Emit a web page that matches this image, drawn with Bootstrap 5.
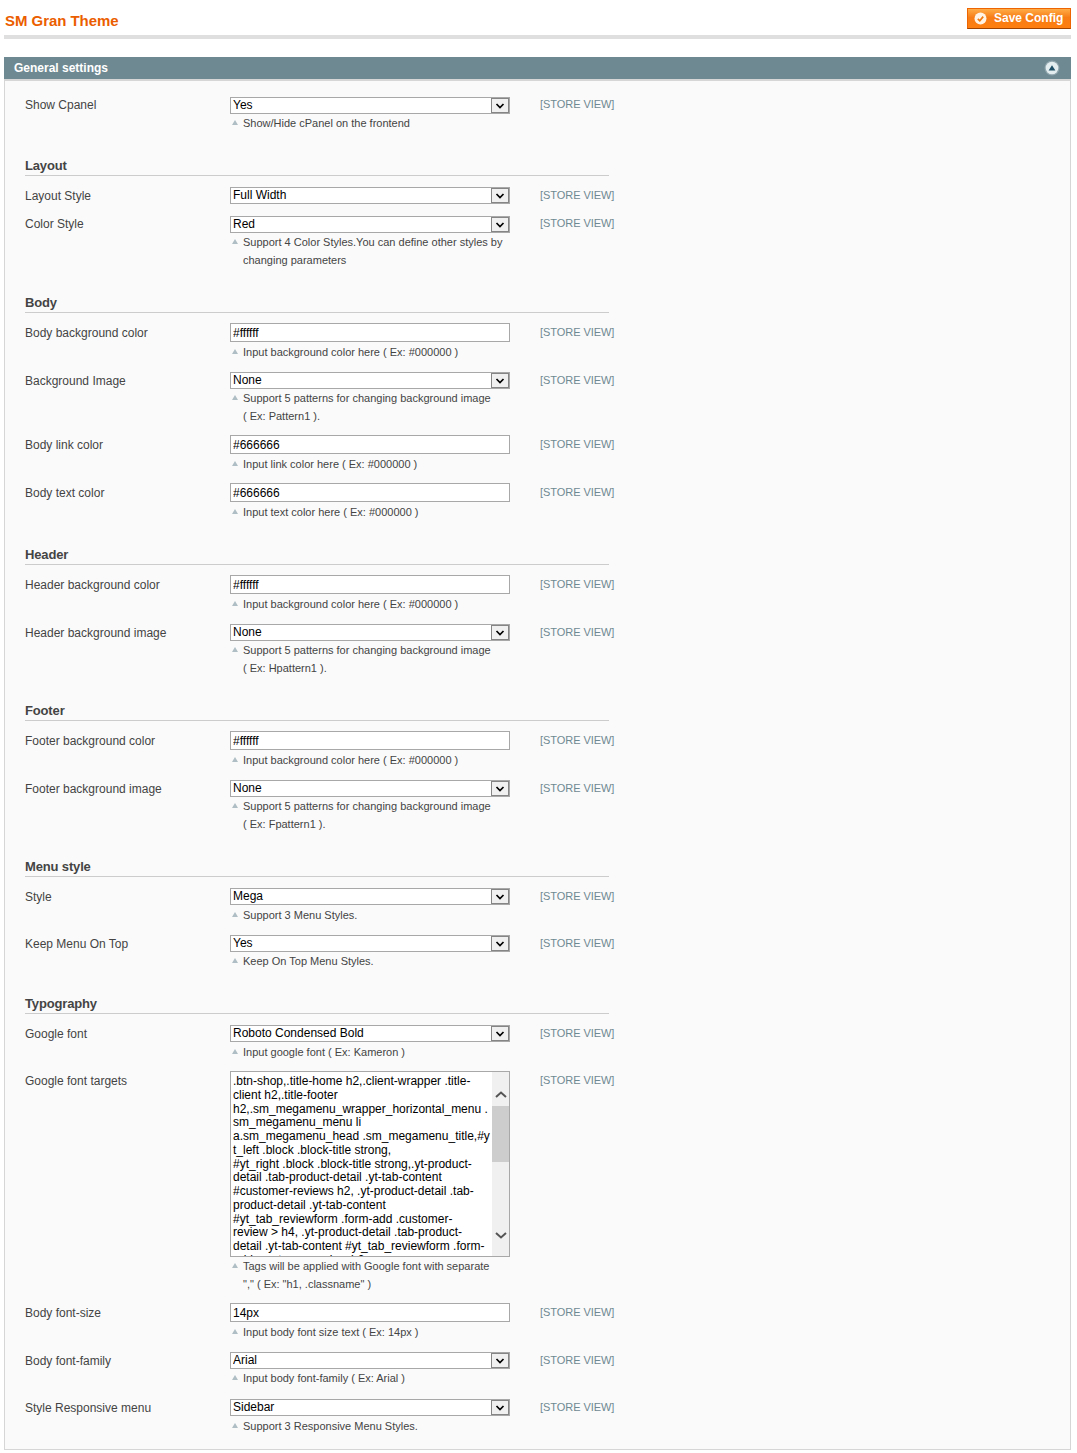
<!DOCTYPE html>
<html lang="en">
<head>
  <meta charset="UTF-8" />
  <meta name="viewport" content="width=device-width, initial-scale=1.0"/>
  <title>SM Gran Theme</title>
  <link href="https://cdn.jsdelivr.net/npm/bootstrap@5.3.0/dist/css/bootstrap.min.css" rel="stylesheet">
  <style>
    body {
      background-color: #fff;
      color: #444;
      font-family: "Liberation Sans", Arial, sans-serif;
      font-size: 12px;
      padding: 0 6px 0 4px;
    }
    .page-head {
      height: 39px;
      border-bottom: 4px solid #dfdfdf;
      padding-top: 8px;
    }
    .page-title {
      font-size: 15px;
      font-weight: 700;
      color: #eb5e00;
      margin: 4px 0 0 1px;
      line-height: 18px;
      letter-spacing: -.05px;
    }
    .save-btn {
      height: 21px;
      width: 104px;
      padding: 0 0 2px 6px;
      border: 1px solid #ed6502;
      border-bottom-color: #a04300;
      border-radius: 0;
      background: linear-gradient(#ffac47, #f77c16 45%, #ff7f0f);
      color: #fff;
      font-size: 12px;
      font-weight: 700;
      gap: 7px;
    }
    .save-btn svg { margin-top: 2px; }
    .panel-head {
      margin-top: 18px;
      height: 22px;
      padding: 0 11px 0 10px;
      background: #6f8992;
      color: #fff;
      font-weight: 700;
    }
    .panel-body {
      background: #fafafa;
      border: 1px solid #d6d6d6;
      border-top-width: 2px;
      padding: 15px 20px 3px;
    }
    .cfg-row { padding-bottom: 11px; }
    .cfg-row.is-bare { padding-bottom: 10px; }
    .cfg-label { width: 205px; line-height: 18px; flex: none; }
    .cfg-field { width: 280px; flex: none; }
    .cfg-scope {
      margin-left: 30px;
      font-size: 11px;
      line-height: 17px;
      color: #6f8992;
      letter-spacing: -.05px;
    }
    .cfg-title {
      width: 584px;
      height: 33px;
      padding-top: 14px;
      margin-bottom: 11px;
      border-bottom: 1px solid #ccc;
      font-size: 13px;
      font-weight: 700;
      line-height: 17px;
      letter-spacing: -.15px;
    }
    .cfg-input, .cfg-pick {
      display: block;
      width: 280px;
      border: 1px solid #a8a8a8;
      border-radius: 0;
      background: #fff;
      color: #000;
      font-size: 12px;
      padding: 0 2px;
      box-shadow: none;
    }
    .cfg-input { height: 19px; min-height: 19px; margin-top: -1px; margin-bottom: 1px; }
    .cfg-pick { height: 17px; line-height: 15px; background-image: none; }
    .pick-box { margin-bottom: 1px; }
    .is-low .pick-box { margin: 1px 0 0; }
    .pick-arrow {
      position: absolute;
      top: 1px;
      right: 1px;
      width: 18px;
      height: 15px;
      background: #f0f0f0;
      border: 1px solid #858585;
      pointer-events: none;
    }
    .cfg-hint {
      font-size: 11px;
      line-height: 18px;
      gap: 5px;
      padding-left: 2px;
      color: #444;
    }
    .is-tight .cfg-hint { margin-top: -1px; }
    .is-held { padding-bottom: 12px; }
    .hint-mark {
      flex: none;
      width: 0;
      height: 0;
      margin-top: 6px;
      border-left: 3.5px solid transparent;
      border-right: 3.5px solid transparent;
      border-bottom: 5px solid #afbec4;
    }
    .cfg-textwrap {
      height: 186px;
      width: 280px;
      margin-top: -1px;
      border: 1px solid #a8a8a8;
      background: #fff;
    }
    .cfg-area {
      flex: 1;
      min-width: 0;
      border: 0;
      padding: 3px 2px 0;
      resize: none;
      overflow: hidden;
      white-space: pre;
      outline: none;
      color: #000;
      font-family: inherit;
      font-size: 12px;
      line-height: 13.75px;
    }
    .fake-scroll {
      width: 17px;
      flex: none;
      background: #f0f0f0;
      padding-top: 34px;
    }
    .fake-scroll svg { position: absolute; left: 3px; }
    .scroll-up { top: 19px; }
    .scroll-down { top: 159px; }
    .fake-thumb { height: 56px; background: #cdcdcd; }
  </style>
</head>
<body>
  <svg width="0" height="0" class="d-block">
    <symbol id="chev" viewBox="0 0 12 8"><path d="M2.5 2 L6 5.5 L9.5 2" fill="none" stroke="#000" stroke-width="1.7"/></symbol>
  </svg>

  <div class="page-head d-flex justify-content-between align-items-start">
    <h3 class="page-title">SM Gran Theme</h3>
    <button class="save-btn btn d-flex align-items-center" type="button">
      <svg width="13" height="13" viewBox="0 0 13 13"><circle cx="6.5" cy="6.5" r="6" fill="#fff3e6"/><path d="M3.8 6.8 L5.8 8.8 L9.2 4.6" fill="none" stroke="#f07a10" stroke-width="1.7"/></svg>
      Save Config
    </button>
  </div>

  <div class="panel-head d-flex justify-content-between align-items-center">
    <span>General settings</span>
    <svg width="16" height="16" viewBox="0 0 16 16"><circle cx="8" cy="8" r="7.5" fill="#8fa5ad"/><circle cx="8" cy="8" r="6.3" fill="#e3ecef"/><path d="M4.6 10.4 L8 5.2 L11.4 10.4 Z" fill="#1f4f66"/></svg>
  </div>

  <div class="panel-body">
    <div class="cfg-row is-low d-flex">
      <div class="cfg-label">Show Cpanel</div>
      <div class="cfg-field">
        <div class="pick-box position-relative"><select class="cfg-pick form-select"><option>Yes</option></select><span class="pick-arrow d-flex align-items-center justify-content-center"><svg width="12" height="8"><use href="#chev"/></svg></span></div>
        <div class="cfg-hint d-flex"><i class="hint-mark"></i><span>Show/Hide cPanel on the frontend</span></div>
      </div>
      <div class="cfg-scope">[STORE VIEW]</div>
    </div>

    <div class="cfg-title">Layout</div>
    <div class="cfg-row is-bare d-flex">
      <div class="cfg-label">Layout Style</div>
      <div class="cfg-field">
        <div class="pick-box position-relative"><select class="cfg-pick form-select"><option>Full Width</option></select><span class="pick-arrow d-flex align-items-center justify-content-center"><svg width="12" height="8"><use href="#chev"/></svg></span></div>
      </div>
      <div class="cfg-scope">[STORE VIEW]</div>
    </div>
    <div class="cfg-row is-low d-flex">
      <div class="cfg-label">Color Style</div>
      <div class="cfg-field">
        <div class="pick-box position-relative"><select class="cfg-pick form-select"><option>Red</option></select><span class="pick-arrow d-flex align-items-center justify-content-center"><svg width="12" height="8"><use href="#chev"/></svg></span></div>
        <div class="cfg-hint d-flex"><i class="hint-mark"></i><span>Support 4 Color Styles.You can define other styles by<br>changing parameters</span></div>
      </div>
      <div class="cfg-scope">[STORE VIEW]</div>
    </div>

    <div class="cfg-title">Body</div>
    <div class="cfg-row d-flex">
      <div class="cfg-label">Body background color</div>
      <div class="cfg-field">
        <input class="cfg-input form-control" value="#ffffff">
        <div class="cfg-hint d-flex"><i class="hint-mark"></i><span>Input background color here ( Ex: #000000 )</span></div>
      </div>
      <div class="cfg-scope">[STORE VIEW]</div>
    </div>
    <div class="cfg-row is-tight d-flex">
      <div class="cfg-label">Background Image</div>
      <div class="cfg-field">
        <div class="pick-box position-relative"><select class="cfg-pick form-select"><option>None</option></select><span class="pick-arrow d-flex align-items-center justify-content-center"><svg width="12" height="8"><use href="#chev"/></svg></span></div>
        <div class="cfg-hint d-flex"><i class="hint-mark"></i><span>Support 5 patterns for changing background image<br>( Ex: Pattern1 ).</span></div>
      </div>
      <div class="cfg-scope">[STORE VIEW]</div>
    </div>
    <div class="cfg-row d-flex">
      <div class="cfg-label">Body link color</div>
      <div class="cfg-field">
        <input class="cfg-input form-control" value="#666666">
        <div class="cfg-hint d-flex"><i class="hint-mark"></i><span>Input link color here ( Ex: #000000 )</span></div>
      </div>
      <div class="cfg-scope">[STORE VIEW]</div>
    </div>
    <div class="cfg-row d-flex">
      <div class="cfg-label">Body text color</div>
      <div class="cfg-field">
        <input class="cfg-input form-control" value="#666666">
        <div class="cfg-hint d-flex"><i class="hint-mark"></i><span>Input text color here ( Ex: #000000 )</span></div>
      </div>
      <div class="cfg-scope">[STORE VIEW]</div>
    </div>

    <div class="cfg-title">Header</div>
    <div class="cfg-row d-flex">
      <div class="cfg-label">Header background color</div>
      <div class="cfg-field">
        <input class="cfg-input form-control" value="#ffffff">
        <div class="cfg-hint d-flex"><i class="hint-mark"></i><span>Input background color here ( Ex: #000000 )</span></div>
      </div>
      <div class="cfg-scope">[STORE VIEW]</div>
    </div>
    <div class="cfg-row is-tight d-flex">
      <div class="cfg-label">Header background image</div>
      <div class="cfg-field">
        <div class="pick-box position-relative"><select class="cfg-pick form-select"><option>None</option></select><span class="pick-arrow d-flex align-items-center justify-content-center"><svg width="12" height="8"><use href="#chev"/></svg></span></div>
        <div class="cfg-hint d-flex"><i class="hint-mark"></i><span>Support 5 patterns for changing background image<br>( Ex: Hpattern1 ).</span></div>
      </div>
      <div class="cfg-scope">[STORE VIEW]</div>
    </div>

    <div class="cfg-title">Footer</div>
    <div class="cfg-row d-flex">
      <div class="cfg-label">Footer background color</div>
      <div class="cfg-field">
        <input class="cfg-input form-control" value="#ffffff">
        <div class="cfg-hint d-flex"><i class="hint-mark"></i><span>Input background color here ( Ex: #000000 )</span></div>
      </div>
      <div class="cfg-scope">[STORE VIEW]</div>
    </div>
    <div class="cfg-row is-tight d-flex">
      <div class="cfg-label">Footer background image</div>
      <div class="cfg-field">
        <div class="pick-box position-relative"><select class="cfg-pick form-select"><option>None</option></select><span class="pick-arrow d-flex align-items-center justify-content-center"><svg width="12" height="8"><use href="#chev"/></svg></span></div>
        <div class="cfg-hint d-flex"><i class="hint-mark"></i><span>Support 5 patterns for changing background image<br>( Ex: Fpattern1 ).</span></div>
      </div>
      <div class="cfg-scope">[STORE VIEW]</div>
    </div>

    <div class="cfg-title">Menu style</div>
    <div class="cfg-row d-flex">
      <div class="cfg-label">Style</div>
      <div class="cfg-field">
        <div class="pick-box position-relative"><select class="cfg-pick form-select"><option>Mega</option></select><span class="pick-arrow d-flex align-items-center justify-content-center"><svg width="12" height="8"><use href="#chev"/></svg></span></div>
        <div class="cfg-hint d-flex"><i class="hint-mark"></i><span>Support 3 Menu Styles.</span></div>
      </div>
      <div class="cfg-scope">[STORE VIEW]</div>
    </div>
    <div class="cfg-row is-tight d-flex">
      <div class="cfg-label">Keep Menu On Top</div>
      <div class="cfg-field">
        <div class="pick-box position-relative"><select class="cfg-pick form-select"><option>Yes</option></select><span class="pick-arrow d-flex align-items-center justify-content-center"><svg width="12" height="8"><use href="#chev"/></svg></span></div>
        <div class="cfg-hint d-flex"><i class="hint-mark"></i><span>Keep On Top Menu Styles.</span></div>
      </div>
      <div class="cfg-scope">[STORE VIEW]</div>
    </div>

    <div class="cfg-title">Typography</div>
    <div class="cfg-row d-flex">
      <div class="cfg-label">Google font</div>
      <div class="cfg-field">
        <div class="pick-box position-relative"><select class="cfg-pick form-select"><option>Roboto Condensed Bold</option></select><span class="pick-arrow d-flex align-items-center justify-content-center"><svg width="12" height="8"><use href="#chev"/></svg></span></div>
        <div class="cfg-hint d-flex"><i class="hint-mark"></i><span>Input google font ( Ex: Kameron )</span></div>
      </div>
      <div class="cfg-scope">[STORE VIEW]</div>
    </div>
    <div class="cfg-row d-flex">
      <div class="cfg-label">Google font targets</div>
      <div class="cfg-field">
        <div class="cfg-textwrap d-flex">
          <textarea class="cfg-area">.btn-shop,.title-home h2,.client-wrapper .title-
client h2,.title-footer
h2,.sm_megamenu_wrapper_horizontal_menu .
sm_megamenu_menu li
a.sm_megamenu_head .sm_megamenu_title,#y
t_left .block .block-title strong,
#yt_right .block .block-title strong,.yt-product-
detail .tab-product-detail .yt-tab-content
#customer-reviews h2, .yt-product-detail .tab-
product-detail .yt-tab-content
#yt_tab_reviewform .form-add .customer-
review &gt; h4, .yt-product-detail .tab-product-
detail .yt-tab-content #yt_tab_reviewform .form-
add .customer-review h2</textarea>
          <div class="fake-scroll position-relative">
            <svg class="scroll-up" width="12" height="8"><path d="M1 6 L6 1.5 L11 6" fill="none" stroke="#555" stroke-width="2"/></svg>
            <div class="fake-thumb"></div>
            <svg class="scroll-down" width="12" height="8"><path d="M1 2 L6 6.5 L11 2" fill="none" stroke="#555" stroke-width="2"/></svg>
          </div>
        </div>
        <div class="cfg-hint d-flex"><i class="hint-mark"></i><span>Tags will be applied with Google font with separate<br>"," ( Ex: "h1, .classname" )</span></div>
      </div>
      <div class="cfg-scope">[STORE VIEW]</div>
    </div>
    <div class="cfg-row d-flex">
      <div class="cfg-label">Body font-size</div>
      <div class="cfg-field">
        <input class="cfg-input form-control" value="14px">
        <div class="cfg-hint d-flex"><i class="hint-mark"></i><span>Input body font size text ( Ex: 14px )</span></div>
      </div>
      <div class="cfg-scope">[STORE VIEW]</div>
    </div>
    <div class="cfg-row is-tight is-held d-flex">
      <div class="cfg-label">Body font-family</div>
      <div class="cfg-field">
        <div class="pick-box position-relative"><select class="cfg-pick form-select"><option>Arial</option></select><span class="pick-arrow d-flex align-items-center justify-content-center"><svg width="12" height="8"><use href="#chev"/></svg></span></div>
        <div class="cfg-hint d-flex"><i class="hint-mark"></i><span>Input body font-family ( Ex: Arial )</span></div>
      </div>
      <div class="cfg-scope">[STORE VIEW]</div>
    </div>
    <div class="cfg-row d-flex">
      <div class="cfg-label">Style Responsive menu</div>
      <div class="cfg-field">
        <div class="pick-box position-relative"><select class="cfg-pick form-select"><option>Sidebar</option></select><span class="pick-arrow d-flex align-items-center justify-content-center"><svg width="12" height="8"><use href="#chev"/></svg></span></div>
        <div class="cfg-hint d-flex"><i class="hint-mark"></i><span>Support 3 Responsive Menu Styles.</span></div>
      </div>
      <div class="cfg-scope">[STORE VIEW]</div>
    </div>
  </div>

  <script src="https://cdn.jsdelivr.net/npm/bootstrap@5.3.0/dist/js/bootstrap.bundle.min.js"></script>
</body>
</html>
